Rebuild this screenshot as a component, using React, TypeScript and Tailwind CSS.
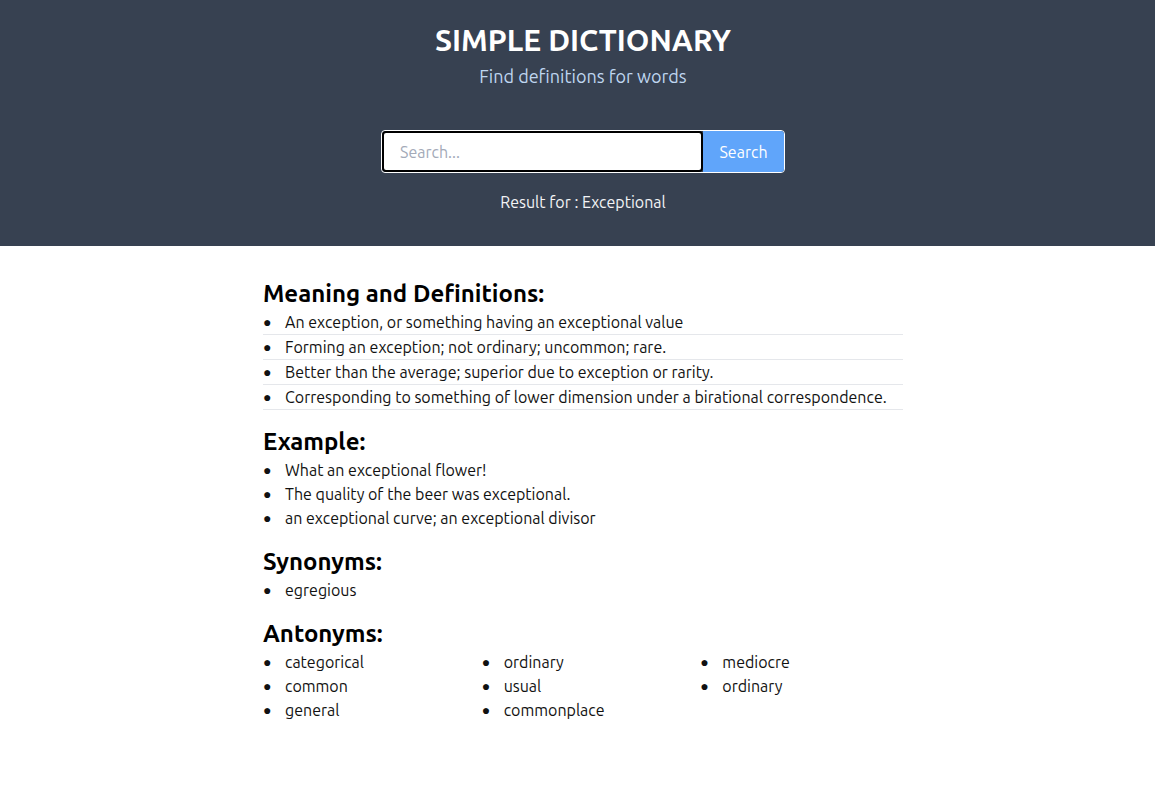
import { useState } from "react";

const definitions = [
  "An exception, or something having an exceptional value",
  "Forming an exception; not ordinary; uncommon; rare.",
  "Better than the average; superior due to exception or rarity.",
  "Corresponding to something of lower dimension under a birational correspondence.",
];

const examples = [
  "What an exceptional flower!",
  "The quality of the beer was exceptional.",
  "an exceptional curve; an exceptional divisor",
];

const synonyms = ["egregious"];

const antonyms = [
  "categorical",
  "ordinary",
  "mediocre",
  "common",
  "usual",
  "ordinary",
  "general",
  "commonplace",
];

const Item = ({ text, divider }: { text: string; divider?: boolean }) => (
  <li className={`flex items-center ${divider ? "h-[25px] border-b border-gray-200" : "h-6"}`}>
    <span className="w-[22px] shrink-0 text-[14px] leading-none">●</span>
    <span>{text}</span>
  </li>
);

export default function App() {
  const [query, setQuery] = useState("");

  return (
    <div className="min-h-screen bg-white font-['Ubuntu','Open_Sans',sans-serif]">
      <header className="bg-[#374151] h-[246px] flex flex-col items-center pl-[11px] pt-[22px] text-white">
        <h1 className="text-[30px] leading-9 font-bold">SIMPLE DICTIONARY</h1>
        <p className="mt-1 text-lg text-[#bfd6f0]">Find definitions for words</p>

        <form
          className="mt-[40px] flex w-[404px] h-[43px] rounded border border-white overflow-hidden"
          onSubmit={(e) => e.preventDefault()}
        >
          <input
            autoFocus
            value={query}
            onChange={(e) => setQuery(e.target.value)}
            placeholder="Search..."
            className="flex-1 min-w-0 bg-white rounded border-2 border-black px-4 text-base text-gray-900 placeholder:text-[#a3aab8] outline-none"
          />
          <button type="submit" className="w-[81px] bg-[#60a5fa] text-white">
            Search
          </button>
        </form>

        <p className="mt-[17px] text-gray-100">Result for : Exceptional</p>
      </header>

      <div className="pl-[11px]">
        <main className="w-[640px] mx-auto pt-8 pb-10 text-[#111]">
          <h2 className="text-2xl leading-8 font-bold text-black">Meaning and Definitions:</h2>
          <ul>
            {definitions.map((d, i) => (
              <Item key={i} text={d} divider />
            ))}
          </ul>

          <h2 className="mt-4 text-2xl leading-8 font-bold text-black">Example:</h2>
          <ul>
            {examples.map((d, i) => (
              <Item key={i} text={d} />
            ))}
          </ul>

          <h2 className="mt-4 text-2xl leading-8 font-bold text-black">Synonyms:</h2>
          <ul>
            {synonyms.map((d, i) => (
              <Item key={i} text={d} />
            ))}
          </ul>

          <h2 className="mt-4 text-2xl leading-8 font-bold text-black">Antonyms:</h2>
          <ul className="grid grid-cols-3 gap-x-4">
            {antonyms.map((d, i) => (
              <Item key={i} text={d} />
            ))}
          </ul>
        </main>
      </div>
    </div>
  );
}
